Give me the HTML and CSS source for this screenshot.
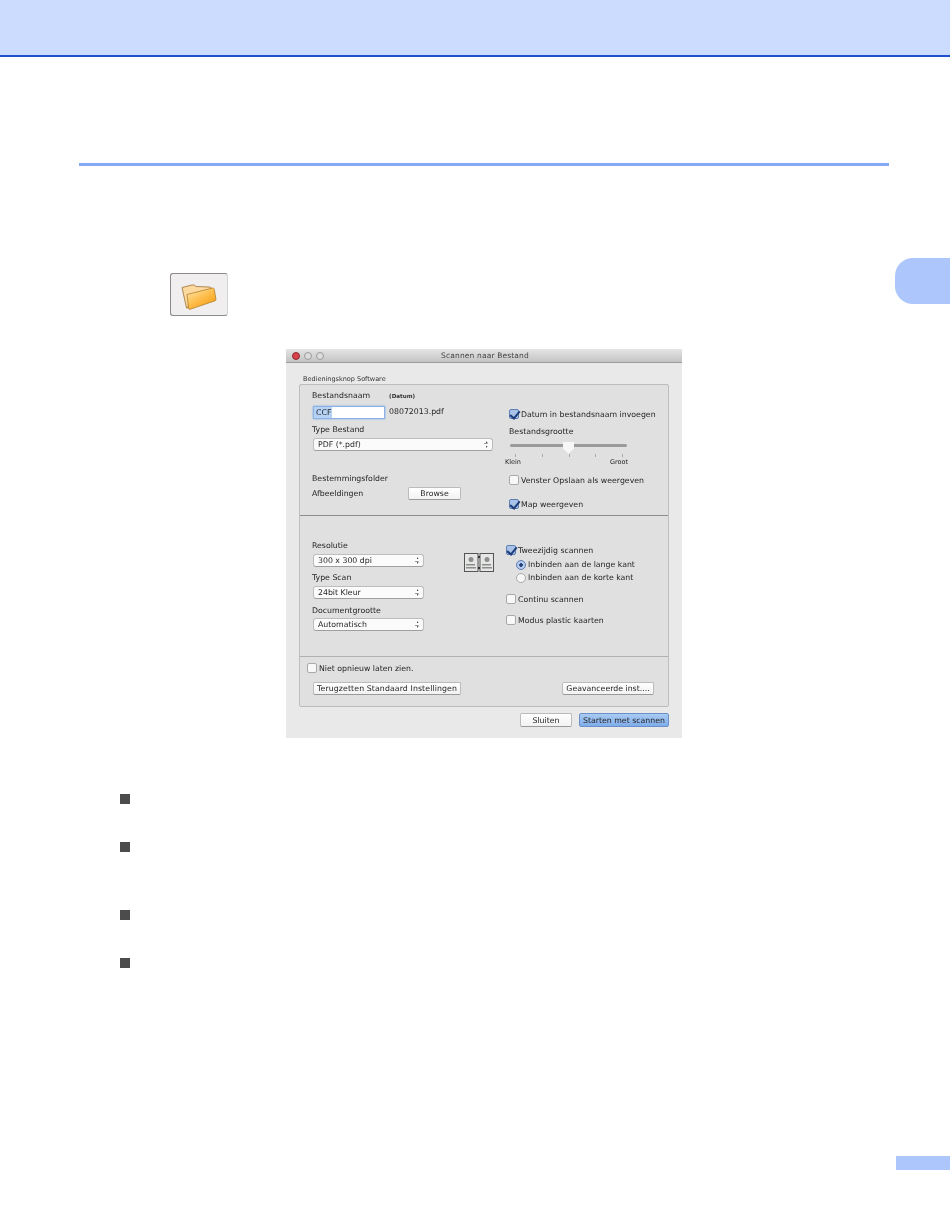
FILE: index.html
```html
<!DOCTYPE html>
<html lang="nl">
<head>
<meta charset="utf-8">
<title>Scannen naar Bestand</title>
<link rel="stylesheet" href="styles.css">
</head>
<body>
<header class="top-band"></header>
<div class="rule"></div>
<div class="chapter-tab"></div>
<div class="tool-icon">
  <svg width="38" height="30" viewBox="0 0 38 30">
    <defs>
      <linearGradient id="fg" x1="0.1" y1="0" x2="0.9" y2="1">
        <stop offset="0" stop-color="#ffe6ac"/>
        <stop offset="0.5" stop-color="#fdbc48"/>
        <stop offset="1" stop-color="#f49a0e"/>
      </linearGradient>
    </defs>
    <path d="M2 7.500 L12 5 Q14.500 4.500 16 6.500 L29 7 Q31 7 31.500 9 L32 12 L9 20 L8 28 L6.500 28 Z" fill="#fbd99f" stroke="#9c6e32" stroke-width="0.8"/>
    <path d="M7 14.500 L32.500 8 Q34 7.800 34.300 9.500 L36 19.500 Q36 20.500 34.500 21 L10 29.300 Q8.800 29.600 8.600 28.300 Z" fill="url(#fg)" stroke="#a8741f" stroke-width="0.7"/>
  </svg>
</div>

<section class="dialog">
  <div class="titlebar">
    <div class="lights"><i class="light close"></i><i class="light"></i><i class="light"></i></div>
    <div class="title">Scannen naar Bestand</div>
  </div>
  <div class="group-label">Bedieningsknop Software</div>
  <div class="panel">
    <div class="sec sec-a">
      <div class="col-left">
        <div class="name-head"><span>Bestandsnaam</span><span class="datum">(Datum)</span></div>
        <div class="name-row"><span class="input">CCF</span><span>08072013.pdf</span></div>
        <div class="lbl lbl-type">Type Bestand</div>
        <div class="select wide"><span>PDF (*.pdf)</span><b class="arrows"></b></div>
        <div class="lbl lbl-dest">Bestemmingsfolder</div>
        <div class="dest-row"><span>Afbeeldingen</span><span class="btn browse">Browse</span></div>
      </div>
      <div class="col-right">
        <label class="check c1"><i class="box on"></i>Datum in bestandsnaam invoegen</label>
        <div class="lbl size-lbl">Bestandsgrootte</div>
        <div class="slider"><i class="track"></i><i class="thumb"></i></div>
        <div class="ticks"><i></i><i></i><i></i><i></i><i></i></div>
        <div class="scale"><span>Klein</span><span>Groot</span></div>
        <label class="check c2"><i class="box"></i>Venster Opslaan als weergeven</label>
        <label class="check c3"><i class="box on"></i>Map weergeven</label>
      </div>
    </div>
    <div class="sec sec-b">
      <div class="col-scan">
        <div class="lbl">Resolutie</div>
        <div class="select"><span>300 x 300 dpi</span><b class="arrows"></b></div>
        <div class="lbl l2">Type Scan</div>
        <div class="select"><span>24bit Kleur</span><b class="arrows"></b></div>
        <div class="lbl l3">Documentgrootte</div>
        <div class="select"><span>Automatisch</span><b class="arrows"></b></div>
      </div>
      <div class="duplex">
        <svg width="30" height="20" viewBox="0 0 30 20">
          <g fill="#e6e6e6" stroke="#555" stroke-width="1">
            <rect x="0.5" y="0.5" width="13.500" height="18"/>
            <rect x="16" y="0.5" width="13.500" height="18"/>
          </g>
          <g fill="#8a8f8a">
            <circle cx="7" cy="6.500" r="2.500"/><circle cx="23" cy="6.500" r="2.500"/>
            <rect x="2" y="11" width="9" height="1.500"/><rect x="18" y="11" width="9" height="1.500"/>
            <rect x="2" y="14" width="10" height="1.500"/><rect x="18" y="14" width="10" height="1.500"/>
          </g>
          <g fill="#333"><rect x="14" y="3" width="2" height="2"/><rect x="14" y="14" width="2" height="2"/></g>
        </svg>
      </div>
      <div class="col-duplex">
        <label class="check"><i class="box on"></i>Tweezijdig scannen</label>
        <label class="check radio r1"><i class="dot on"></i>Inbinden aan de lange kant</label>
        <label class="check radio r2"><i class="dot"></i>Inbinden aan de korte kant</label>
        <label class="check d1"><i class="box"></i>Continu scannen</label>
        <label class="check d2"><i class="box"></i>Modus plastic kaarten</label>
      </div>
    </div>
    <div class="sec sec-c">
      <label class="check"><i class="box"></i>Niet opnieuw laten zien.</label>
      <div class="btn-row">
        <span class="btn reset">Terugzetten Standaard Instellingen</span>
        <span class="btn adv">Geavanceerde inst....</span>
      </div>
    </div>
  </div>
  <div class="actions">
    <span class="btn close-btn">Sluiten</span>
    <span class="btn primary">Starten met scannen</span>
  </div>
</section>

<ul class="bullets">
  <li></li>
  <li class="b2"></li>
  <li class="b3"></li>
  <li class="b4"></li>
</ul>
<div class="page-no"></div>
</body>
</html>
```
FILE: styles.css
```css
* { box-sizing: border-box; }
html, body { margin: 0; padding: 0; }
body {
  position: relative;
  width: 950px;
  height: 1226px;
  overflow: hidden;
  background: #fff;
  font-family: "DejaVu Sans", sans-serif;
  font-size: 7.8px;
  color: #1f1f1f;
}
.top-band { height: 57px; background: #ccdcff; border-bottom: 2px solid #1f50cf; }
.rule { height: 3px; margin: 106px 61px 0 79px; background: #86a9f5; }
.chapter-tab {
  position: absolute; left: 895px; top: 258px; width: 55px; height: 46px;
  background: #adc6fb; border-radius: 18px 0 0 18px;
}
.tool-icon {
  width: 58px; height: 43px; margin: 107px 0 0 170px;
  background: #f0eeee; border: 1px solid #8b8b8b; border-right-color: #d4d4d4;
  border-radius: 3px;
  display: flex; align-items: center; justify-content: center;
}

.dialog {
  width: 396px; height: 389px; margin: 33px 0 0 286px;
  background: #e9e9e9; padding: 0 13px;
  filter: blur(0.3px);
}
.titlebar {
  height: 14px; margin: 0 -13px; display: flex; align-items: center; position: relative;
  background: linear-gradient(#e4e4e4, #c4c4c4); border-bottom: 1px solid #9d9d9d;
}
.lights { display: flex; gap: 4px; margin-left: 6px; }
.light { width: 8px; height: 8px; border-radius: 50%; background: #dcdcdc; border: 1px solid #9a9a9a; }
.light.close { background: #d9404a; border-color: #8f2a30; }
.title { flex: 1; text-align: center; margin-right: 36px; color: #444; letter-spacing: .15px; font-size: 7.5px; }
.group-label { margin: 12px 0 0 4px; height: 9px; line-height: 9px; font-size: 6.5px; color: #333; }
.panel {
  height: 323px; background: #e0e0e0;
  border: 1px solid #bdbdbd; border-radius: 2px;
}
.sec { display: flex; position: relative; }
.sec-a { height: 131px; border-bottom: 1px solid #8e8e8e; }
.sec-b { height: 141px; border-bottom: 1px solid #b0b0b0; }
.sec-c { height: 49px; display: block; padding: 7px 0 0 7px; }

.lbl, .name-head, .dest-row, .name-row { line-height: 10px; white-space: nowrap; }
.col-left { width: 196px; padding: 6px 0 0 12px; }
.col-right { padding: 25px 0 0 13px; flex: 1; }
.name-head { display: flex; align-items: center; height: 10px; }
.datum { font-size: 5.6px; margin-left: 19px; font-weight: 700; color: #333; }
.name-row { display: flex; align-items: center; margin-top: 4px; height: 14px; }
.input {
  width: 72px; height: 13px; margin: 0 4px 0 1px; padding-left: 2px; line-height: 12px;
  background: linear-gradient(90deg, #b6d2f4 18px, #fff 18px);
  border: 1px solid #8ab2e6; box-shadow: 0 0 2px #7fa9e0;
}
.lbl-type { margin-top: 6px; }
.select {
  width: 111px; height: 13px; margin: 3px 0 0 1px; padding: 0 4px 0 4px;
  display: flex; justify-content: space-between; align-items: center;
  background: #fbfbfb; border: 1px solid #bdbdbd; border-bottom-color: #9f9f9f; border-radius: 3px;
}
.select.wide { width: 180px; }
.arrows {
  width: 4px; height: 7px; flex: none;
  background: linear-gradient(#444 2.5px, transparent 2.5px, transparent 4.5px, #444 4.5px);
  clip-path: polygon(50% 0, 100% 35%, 0 35%, 0 65%, 100% 65%, 50% 100%);
}
.lbl-dest { margin-top: 23px; }
.dest-row { display: flex; align-items: center; justify-content: flex-start; margin-top: 3px; height: 13px; }
.dest-row span:first-child { width: 96px; }

.btn {
  display: inline-flex; align-items: center; justify-content: center;
  height: 13px; background: linear-gradient(#fff, #f2f2f2);
  border: 1px solid #bbb; border-bottom-color: #999; border-radius: 2px;
  white-space: nowrap; color: #1f1f1f;
}
.browse { width: 53px; }

.check { display: flex; align-items: center; height: 10px; line-height: 10px; white-space: nowrap; }
.box {
  width: 10px; height: 10px; margin: 0 2px 2px 0; flex: none; position: relative;
  background: #f8f8f8; border: 1px solid #a9a9a9; border-radius: 2px;
}
.box.on { background: #a9c3e8; border-color: #5d7fb4; }
.box.on::after {
  content: ""; position: absolute; left: 2px; top: -1px; width: 4px; height: 8px;
  border: solid #1f3d78; border-width: 0 2px 2px 0; transform: rotate(40deg);
}
.dot {
  width: 10px; height: 10px; margin-right: 2px; flex: none; border-radius: 50%;
  background: #f6f6f6; border: 1px solid #a9a9a9;
}
.dot.on { background: radial-gradient(circle, #1f3d78 0 1.5px, #b4cbed 2px); border-color: #5d7fb4; }

.size-lbl { margin-top: 7px; }
.slider { position: relative; height: 13px; margin: 5px 0 0 1px; width: 117px; }
.track { position: absolute; left: 0; right: 0; top: 2px; height: 3px; border-radius: 2px; background: #9a9a9a; }
.thumb {
  position: absolute; left: 53px; top: 0; width: 11px; height: 12px;
  background: #f7f7f7; border: 0;
  clip-path: polygon(0 0, 100% 0, 100% 55%, 50% 100%, 0 55%);
  filter: drop-shadow(0 0 1px #777);
}
.ticks { display: flex; justify-content: space-between; width: 108px; margin: -1px 0 0 6px; height: 4px; }
.ticks i { width: 1px; height: 3px; background: #aaa; }
.scale { display: flex; justify-content: space-between; width: 123px; margin: 0 0 0 -4px; font-size: 6.5px; line-height: 8px; }
.c2 { margin-top: 10px; }
.c3 { margin-top: 14px; }

.col-scan { width: 164px; padding: 25px 0 0 12px; }
.l2 { margin-top: 6px; }
.l3 { margin-top: 7px; }
.l3 + .select { margin-top: 2px; }
.duplex { width: 42px; padding-top: 37px; }
.col-duplex { padding-top: 30px; }
.radio { margin: 4px 0 0 10px; }
.r2 { margin-top: 3px; }
.d1 { margin-top: 12px; }
.d2 { margin-top: 11px; }
.btn-row { display: flex; justify-content: space-between; margin: 8px 14px 0 6px; }
.reset { width: 148px; letter-spacing: .1px; }
.adv { width: 92px; }

.actions { display: flex; justify-content: flex-end; gap: 7px; margin-top: 6px; }
.close-btn { width: 52px; height: 14px; }
.primary {
  width: 90px; height: 14px;
  background: linear-gradient(#a9cbf3, #7fadea); border-color: #6a90c9;
}

.bullets { list-style: none; margin: 0; padding: 0; position: absolute; left: 120px; top: 794px; }
.bullets li { width: 10px; height: 10px; background: #4c4c4c; }
.bullets .b2 { margin-top: 38px; }
.bullets .b3 { margin-top: 58px; }
.bullets .b4 { margin-top: 38px; }
.page-no { position: absolute; left: 896px; top: 1156px; width: 54px; height: 14px; background: #adc6fb; }
```
